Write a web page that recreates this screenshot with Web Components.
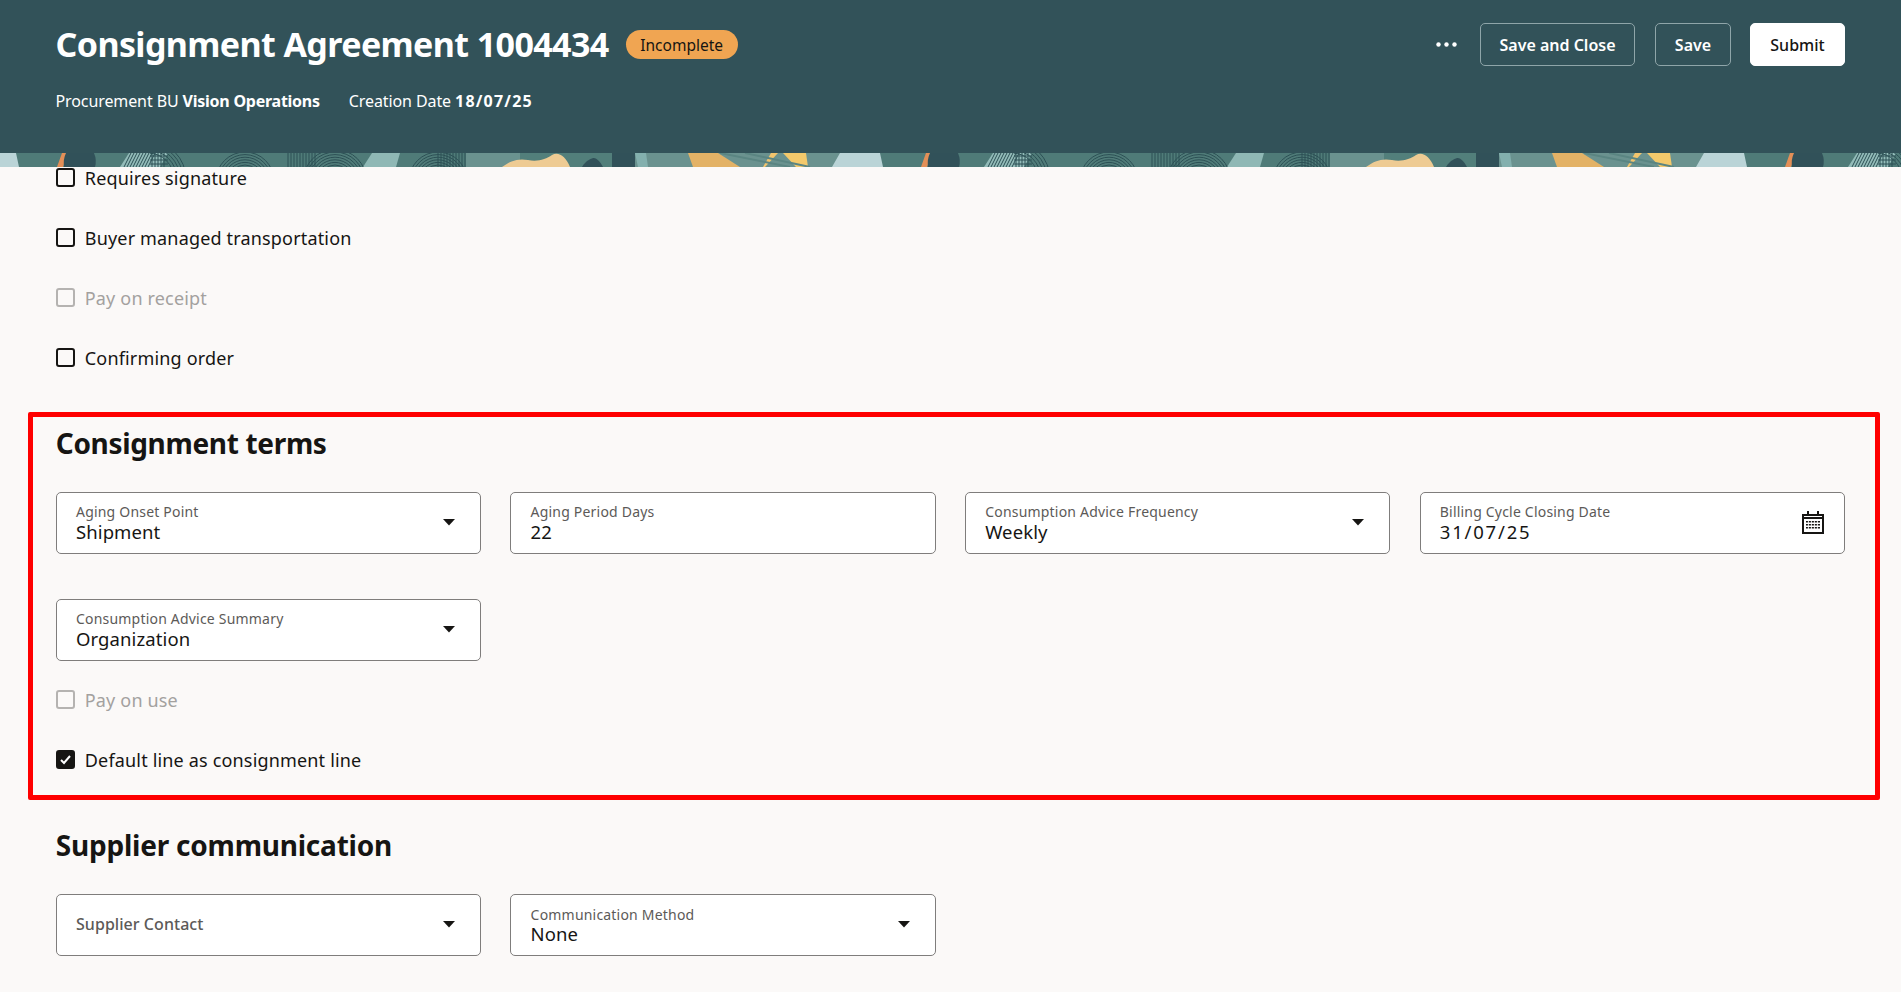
<!DOCTYPE html>
<html lang="en"><head><meta charset="utf-8"><title>Consignment Agreement 1004434</title>
<style>
html,body{margin:0;padding:0;height:992px;overflow:hidden;background:#fbf9f8;color:#161513;font-family:"Noto Sans","Open Sans",sans-serif}
</style></head><body>
<agreement-page>
  <page-header slot="header" heading="Consignment Agreement 1004434" status="Incomplete">
    <span slot="meta">Procurement BU <b style="letter-spacing:-.25px">Vision Operations</b></span>
    <span slot="meta">Creation Date <b style="letter-spacing:1.2px">18/07/25</b></span>
    <more-dots slot="actions"></more-dots>
    <action-button slot="actions" style="width:155px">Save and Close</action-button>
    <action-button slot="actions" style="width:76px;margin-left:20px">Save</action-button>
    <action-button slot="actions" primary style="width:95px;margin-left:19px">Submit</action-button>
  </page-header>
  <banner-strip></banner-strip>
  <check-list>
    <check-row>Requires signature</check-row>
    <check-row>Buyer managed transportation</check-row>
    <check-row disabled>Pay on receipt</check-row>
    <check-row>Confirming order</check-row>
  </check-list>
  <form-section heading="Consignment terms" highlighted style="margin-top:54px;--ls:-.33px">
    <field-grid>
      <form-field label="Aging Onset Point" value="Shipment" icon="caret"></form-field>
      <form-field label="Aging Period Days" value="22"></form-field>
      <form-field label="Consumption Advice Frequency" value="Weekly" icon="caret"></form-field>
      <form-field label="Billing Cycle Closing Date" value="31/07/25" icon="calendar" wide-digits></form-field>
      <form-field label="Consumption Advice Summary" value="Organization" icon="caret"></form-field>
    </field-grid>
    <check-list style="margin-top:28.5px">
      <check-row disabled>Pay on use</check-row>
      <check-row checked>Default line as consignment line</check-row>
    </check-list>
  </form-section>
  <form-section heading="Supplier communication" style="margin-top:54px;--ls:-.22px">
    <field-grid>
      <form-field label="Supplier Contact" icon="caret"></form-field>
      <form-field label="Communication Method" value="None" icon="caret" style="--pt:11px;--vm:-2px"></form-field>
    </field-grid>
  </form-section>
</agreement-page>
<script>
const def=(name,css,html,init)=>{customElements.define(name,class extends HTMLElement{
  constructor(){super();const r=this.attachShadow({mode:'open'});r.innerHTML=`<style>${css}</style>`+(typeof html==='function'?html(this):html);}
  connectedCallback(){
    if(init)init(this,this.shadowRoot);
  }
});};

def('agreement-page',`:host{display:block}`,`<slot name="header"></slot><slot></slot>`);

def('page-header',`
:host{display:block;background:#325259;color:#fff;height:153px;box-sizing:border-box;padding:23px 56px 0 55.5px}
.top{display:flex;align-items:flex-start;height:43px}
h1{margin:0;font-size:34px;line-height:43px;font-weight:700;letter-spacing:-.6px;white-space:nowrap}
.badge{margin:7px 0 0 17px}
.actions{margin-left:auto;display:flex;align-items:center}
.meta{display:flex;gap:29px;margin-top:23px;font-size:16px;line-height:24px;letter-spacing:-.1px}
`,`<div class="top"><h1 id="h"></h1><status-badge class="badge" id="b"></status-badge><div class="actions"><slot name="actions"></slot></div></div>
<div class="meta"><slot name="meta"></slot></div>`,(el,r)=>{r.getElementById('h').textContent=el.getAttribute('heading');r.getElementById('b').textContent=el.getAttribute('status');});

def('status-badge',`:host{display:inline-flex;align-items:center;justify-content:center;width:112px;height:29px;border-radius:15px;background:#f0a552;color:#161513;font-size:15.5px;box-sizing:border-box}`,`<slot></slot>`);

def('more-dots',`:host{display:block;width:21px;height:5px;margin-right:23px}svg{display:block}`,`<svg width="21" height="5" viewBox="0 0 21 5"><circle cx="2.5" cy="2.5" r="2.2" fill="#fff"/><circle cx="10.5" cy="2.5" r="2.2" fill="#fff"/><circle cx="18.5" cy="2.5" r="2.2" fill="#fff"/></svg>`);

def('action-button',`:host{display:inline-flex;align-items:center;justify-content:center;height:43px;box-sizing:border-box;border:1px solid #8fa5a9;border-radius:5px;color:#fff;font-size:16px;font-weight:600;white-space:nowrap}
:host([primary]){background:#fff;border-color:#fff;color:#161513;font-weight:500}`,`<slot></slot>`);

const arcs=(cx,cy,r0,r1,step,clip)=>{let s='';for(let r=r0;r<=r1;r+=step)s+=`<circle cx="${cx}" cy="${cy}" r="${r}"/>`;return `<g clip-path="url(#${clip})">${s}</g>`;};
const lines=(a,b,step,dx)=>{let s='';for(let x=a;x<=b;x+=step)s+=`M${x} 14L${x+dx} 0`;return `<path d="${s}"/>`;};
def('banner-strip',`:host{display:block;height:14px;overflow:hidden;background:#507c79}svg{display:block}`,`<svg width="1901" height="14" aria-hidden="true">
<defs>
<clipPath id="c1"><rect x="203" width="84" height="14"/></clipPath>
<clipPath id="c2"><rect x="283" width="85" height="14"/></clipPath>
<clipPath id="c3"><rect x="404" width="63" height="14"/></clipPath>
<clipPath id="c4"><rect x="150" width="40" height="14"/></clipPath>
<pattern id="p" width="864" height="14" patternUnits="userSpaceOnUse">
<rect width="864" height="14" fill="#4f7b78"/>
<rect x="466" width="398" height="14" fill="#6a928f"/>
<path d="M520 0H612V14H520Z" fill="#527f7b"/>
<path d="M-24 0H16L19 14H-32ZM840 0H880L883 14H832Z" fill="#bad4d7"/>
<path d="M62 0H68L63 14H57Z" fill="#e38f57"/>
<path d="M66 0H94Q97 7 95 14H64Q63 6 66 0Z" fill="#315159"/>
<path d="M120 14L129 0H168L160 14Z" fill="#93bcb9"/>
<path d="M363 14L372 0H400L396 14Z" fill="#8fb8b5"/>
<g fill="none" stroke="#2b4f54" stroke-width="1">
 ${lines(124,150,3,7)}
 <path d="M152 0V14M155 0V14M158 0V14M161 0V14M164 0V14M150 3H168M150 7H168M150 11H168"/>
 ${arcs(148,26,26,40,3,'c4')}
 ${arcs(245,28,16,30,2.6,'c1')}
 ${arcs(335,28,16,32,2.6,'c2')}
 ${lines(288,316,3,0)}
 ${arcs(438,28,16,30,2.6,'c3')}
 ${lines(438,466,3,0)}
</g>
<path d="M502 14C510 8 518 5 528 7S546 6 552 2 566 3 570 14Z" fill="#eecb93"/>
<path d="M582 14C586 7 592 5 594 5S600 8 603 14Z" fill="#315159"/>
<path d="M612 0H635V14H612Z" fill="#315159"/>
<path d="M635 0H646L648 14H638Z" fill="#83b0ae"/>
<path d="M688 0H718L740 14H693Z" fill="#e3b266"/>
<path d="M778 0H771L763 14H765Z" fill="#f2c56d"/>
<path d="M783 0H806L808 14H796Z" fill="#f3c96b"/>
<path d="M720 0L790 14M745 0L810 14" stroke="#5a8582" stroke-width="2" fill="none"/>
</pattern></defs>
<rect width="1901" height="14" fill="url(#p)"/></svg>`);

def('check-list',`:host{display:flex;flex-direction:column;gap:38px;padding:0 55.8px}
:host-context(form-section){padding:0}`,`<slot></slot>`);

def('check-row',`:host{display:flex;align-items:center;height:22px;font-size:18px;line-height:22px;letter-spacing:.17px;color:#161513;white-space:nowrap}
:host([disabled]){color:#a3a19f}
.b{width:19px;height:19px;box-sizing:border-box;border:2px solid #161513;border-radius:3px;margin:-1px 10px 0 0;flex:none;display:flex;align-items:center;justify-content:center}
:host([disabled]) .b{border-color:#b5b3b1;background:#fbf9f8}
:host([checked]) .b{background:#161513}
svg{display:none}:host([checked]) svg{display:block}`,`<span class="b"><svg width="13" height="13" viewBox="0 0 13 13"><path d="M2 7l3 3 6-7" fill="none" stroke="#fff" stroke-width="2"/></svg></span><slot></slot>`);

def('form-section',`:host{display:block;position:relative;margin:0 56px 0 55.8px}
h2{margin:0 0 29px;font-size:28px;line-height:40px;font-weight:700;letter-spacing:var(--ls,-.3px);white-space:nowrap}
.hl{display:none;position:absolute;left:-27.8px;right:-35px;top:-11px;bottom:-29px;border:5px solid #ff0000;border-radius:2px;pointer-events:none}
:host([highlighted]) .hl{display:block}`,`<h2 id="h"></h2><slot></slot><div class="hl"></div>`,(el,r)=>{r.getElementById('h').textContent=el.getAttribute('heading');});

def('field-grid',`:host{display:grid;grid-template-columns:repeat(4,1fr);column-gap:29.2px;row-gap:45.5px}`,`<slot></slot>`);

const caret=`<svg class="ic" width="12" height="7" viewBox="0 0 12 7" style="right:25px;top:26px"><path d="M0 0H12L6 6.5Z" fill="#161513"/></svg>`;
const cal=`<svg class="ic" width="22" height="23" viewBox="0 0 22 23" style="right:20px;top:18px"><path d="M1 4H21V22H1Z" fill="none" stroke="#161513" stroke-width="2"/><path d="M6 0V5M16 0V5M1 7H21" stroke="#161513" stroke-width="2" fill="none"/><g fill="#161513"><path d="M4 10h14v1.4H4zM4 13h14v1.4H4zM4 16h14v1.4H4z"/></g><path d="M6.4 9.5v8.5M9.4 9.5v8.5M12.4 9.5v8.5M15.4 9.5v8.5" stroke="#fff" stroke-width=".9"/></svg>`;
def('form-field',`:host{display:block;position:relative;height:61.5px;box-sizing:border-box;background:#fff;border:1px solid #7f7d7c;border-radius:5px;padding:var(--pt,10px) 50px 0 19.2px;font-size:18px;white-space:nowrap}
.l{font-size:14px;line-height:18px;letter-spacing:.2px;color:#5c5a58;height:18px}
.v{font-size:18.5px;line-height:24px;letter-spacing:.1px;color:#161513;margin-top:var(--vm,-1px)}
:host([wide-digits]) .v{letter-spacing:1.8px}
:host(.empty) .l{font-size:16px;font-weight:500;letter-spacing:.05px;line-height:38px;height:38px;color:#5c5a58}
.ic{position:absolute;display:block}`,`<div class="l" id="l"></div><div class="v" id="v"></div><span id="i"></span>`,(el,r)=>{
  r.getElementById('l').textContent=el.getAttribute('label');
  const v=el.getAttribute('value');if(v)r.getElementById('v').textContent=v;else el.classList.add('empty');
  const i=el.getAttribute('icon');r.getElementById('i').innerHTML=i==='caret'?caret:i==='calendar'?cal:'';
});
</script>
</body></html>
